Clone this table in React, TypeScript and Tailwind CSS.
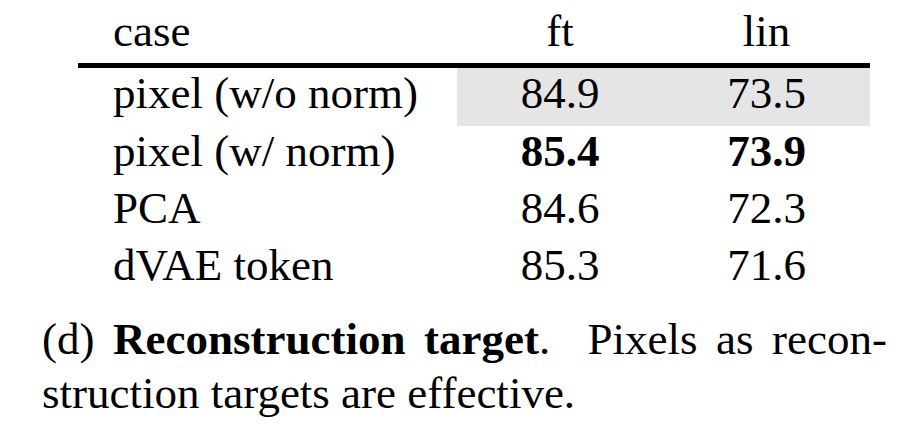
const rows = [
  { name: "pixel (w/o norm)", ft: "84.9", lin: "73.5", shade: true, bold: false },
  { name: "pixel (w/ norm)", ft: "85.4", lin: "73.9", shade: false, bold: true },
  { name: "PCA", ft: "84.6", lin: "72.3", shade: false, bold: false },
  { name: "dVAE token", ft: "85.3", lin: "71.6", shade: false, bold: false },
];

export default function App() {
  return (
    <div className="w-[912px] h-[431px] bg-white text-black font-['Liberation_Serif',serif] text-[45px] overflow-hidden">
      {/* Table */}
      <div className="ml-[78px] w-[792px]">
        <div className="flex h-[63px] leading-[63px]">
          <div className="w-[379px] pl-[35px]">case</div>
          <div className="w-[206px] text-center">ft</div>
          <div className="w-[207px] text-center">lin</div>
        </div>
        <div className="h-[5px] bg-black" />
        {rows.map((r, i) => (
          <div
            key={r.name}
            className={`flex leading-[51px] ${i === 0 ? "h-[58px]" : "h-[57px]"}`}
          >
            <div className="w-[379px] pl-[35px] whitespace-nowrap">{r.name}</div>
            <div
              className={`flex w-[413px] ${r.shade ? "bg-[#e5e5e5]" : ""} ${
                r.bold ? "font-bold" : ""
              }`}
            >
              <div className="w-[206px] text-center">{r.ft}</div>
              <div className="w-[207px] text-center">{r.lin}</div>
            </div>
          </div>
        ))}
      </div>

      {/* Caption */}
      <div className="mt-[15px] pl-[42px] pr-[25px] leading-[54px]">
        <div className="text-justify [text-align-last:justify] whitespace-pre-wrap">
          (d) <span className="font-bold">Reconstruction target</span>.  Pixels as recon-
        </div>
        <div>struction targets are effective.</div>
      </div>
    </div>
  );
}
